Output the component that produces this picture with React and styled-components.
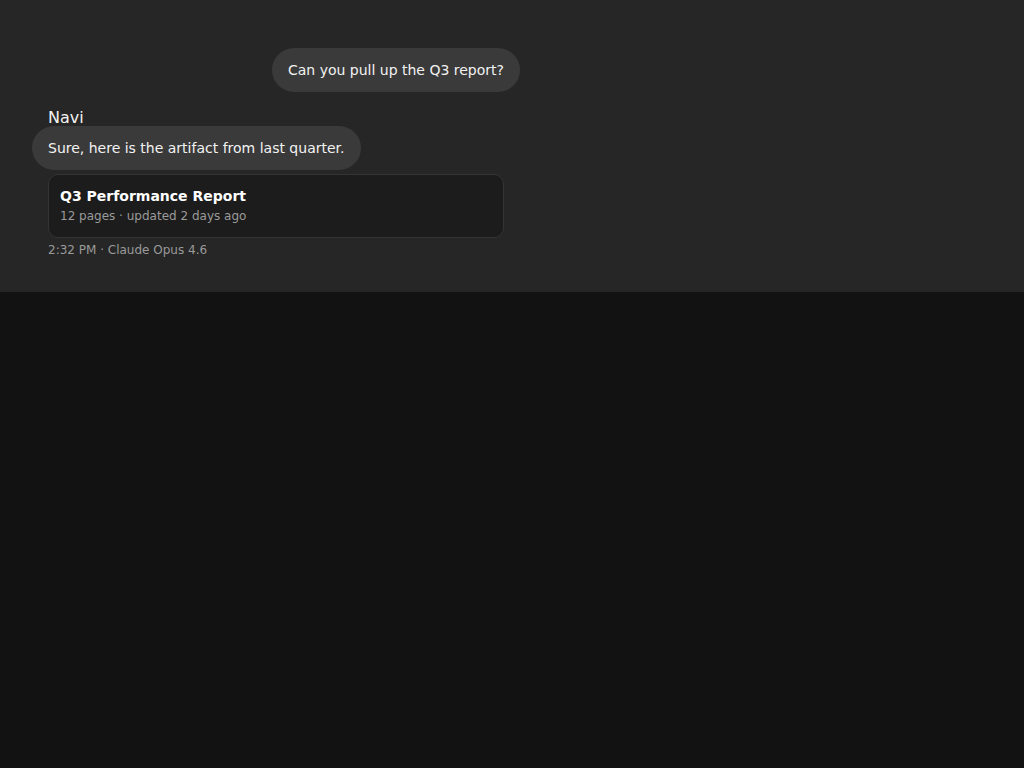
import React from "react";
import styled, { createGlobalStyle } from "styled-components";

const Global = createGlobalStyle`
  html, body {
    margin: 0;
    padding: 0;
    background: #121212;
    font-family: "DejaVu Sans", "Liberation Sans", sans-serif;
  }
`;

const Thread = styled.section`
  background: #262626;
  padding: 48px 48px 33px;
  display: flex;
  flex-direction: column;
`;

const Column = styled.div`
  width: 456px;
  display: flex;
  flex-direction: column;
  gap: 16px;
`;

const Message = styled.div`
  display: flex;
  flex-direction: column;
  align-items: ${(p) => (p.$mine ? "flex-end" : "flex-start")};
  margin-right: ${(p) => (p.$mine ? "-16px" : "0")};
`;

const Sender = styled.div`
  font-size: 16px;
  line-height: 20px;
  margin-bottom: -2px;
  color: #f2f2f2;
`;

const Bubble = styled.div`
  background: #3a3a3a;
  color: #f2f2f2;
  font-size: 14px;
  line-height: 20px;
  padding: 12px 16px;
  border-radius: 22px;
  margin-left: ${(p) => (p.$mine ? "0" : "-16px")};
`;

const Artifact = styled.div`
  align-self: stretch;
  margin-top: 4px;
  background: #1c1c1c;
  border: 1px solid #343434;
  border-radius: 10px;
  padding: 11px 11px 12px;
  display: flex;
  flex-direction: column;
  gap: 1px;
`;

const ArtifactTitle = styled.div`
  font-size: 14px;
  line-height: 20px;
  font-weight: 700;
  color: #ffffff;
`;

const ArtifactMeta = styled.div`
  font-size: 12px;
  line-height: 18px;
  color: #9a9a9a;
`;

const Footnote = styled.div`
  margin-top: 3px;
  font-size: 12px;
  line-height: 18px;
  color: #9a9a9a;
`;

export default function App() {
  return (
    <>
      <Global />
      <Thread>
        <Column>
          <Message $mine>
            <Bubble $mine>Can you pull up the Q3 report?</Bubble>
          </Message>
          <Message>
            <Sender>Navi</Sender>
            <Bubble>Sure, here is the artifact from last quarter.</Bubble>
            <Artifact>
              <ArtifactTitle>Q3 Performance Report</ArtifactTitle>
              <ArtifactMeta>12 pages · updated 2 days ago</ArtifactMeta>
            </Artifact>
            <Footnote>2:32 PM · Claude Opus 4.6</Footnote>
          </Message>
        </Column>
      </Thread>
    </>
  );
}
